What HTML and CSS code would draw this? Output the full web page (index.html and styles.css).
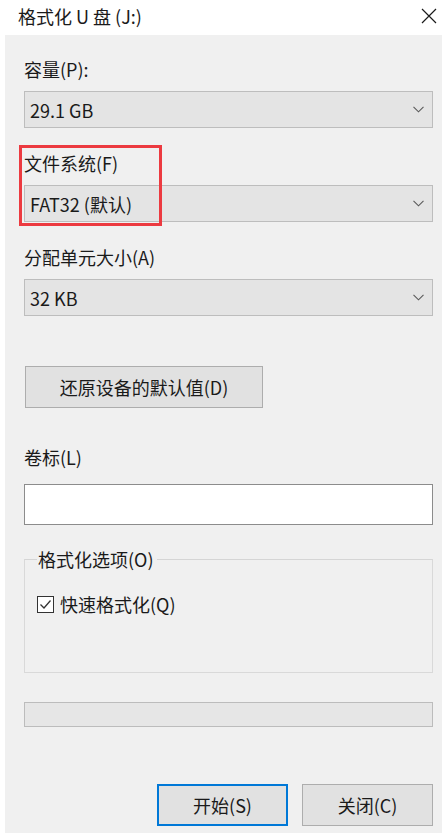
FILE: index.html
```html
<!DOCTYPE html>
<html lang="zh-CN">
<head>
<meta charset="utf-8">
<title>格式化 U 盘 (J:)</title>
<link rel="stylesheet" href="styles.css">
</head>
<body>
<div class="window">
  <div class="titlebar">
    <span class="title">格式化 U 盘 (J:)</span>
    <svg class="close" width="16" height="16" viewBox="0 0 16 16"><path d="M1 1 L15 15 M15 1 L1 15" stroke="#1a1a1a" stroke-width="1.2" fill="none"/></svg>
  </div>
  <div class="dialog">
    <div class="field">
      <div class="label">容量(P):</div>
      <div class="select"><span>29.1 GB</span><svg class="chev" width="11" height="7" viewBox="0 0 11 7"><path d="M0.5 0.8 L5.5 5.8 L10.5 0.8" stroke="#5a5a5a" stroke-width="1.1" fill="none"/></svg></div>
    </div>
    <div class="field field-gap">
      <div class="label">文件系统(F)</div>
      <div class="select"><span>FAT32 (默认)</span><svg class="chev" width="11" height="7" viewBox="0 0 11 7"><path d="M0.5 0.8 L5.5 5.8 L10.5 0.8" stroke="#5a5a5a" stroke-width="1.1" fill="none"/></svg></div>
      <div class="highlight"></div>
    </div>
    <div class="field field-gap">
      <div class="label">分配单元大小(A)</div>
      <div class="select"><span>32 KB</span><svg class="chev" width="11" height="7" viewBox="0 0 11 7"><path d="M0.5 0.8 L5.5 5.8 L10.5 0.8" stroke="#5a5a5a" stroke-width="1.1" fill="none"/></svg></div>
    </div>
    <button class="btn restore">还原设备的默认值(D)</button>
    <div class="label volume-label">卷标(L)</div>
    <div class="textbox"></div>
    <fieldset class="group">
      <legend>格式化选项(O)</legend>
      <div class="check-row">
        <svg class="checkbox" width="17" height="17" viewBox="0 0 17 17"><rect x="0.5" y="0.5" width="16" height="16" fill="#ffffff" stroke="#333333" stroke-width="1"/><path d="M3.5 8.5 L7 12 L13.5 4.5" stroke="#333333" stroke-width="1.3" fill="none"/></svg>
        <span>快速格式化(Q)</span>
      </div>
    </fieldset>
    <div class="progress"></div>
    <div class="actions">
      <button class="btn action primary">开始(S)</button>
      <button class="btn action">关闭(C)</button>
    </div>
  </div>
</div>
</body>
</html>
```

FILE: styles.css
```css
* { box-sizing: border-box; }
html, body {
  margin: 0;
  padding: 0;
  background: #ffffff;
}
body {
  font-family: "Noto Sans CJK SC", "Noto Sans", sans-serif;
  color: #1a1a1a;
  font-size: 18px;
}
.window {
  width: 442px;
  height: 833px;
  display: flex;
  flex-direction: column;
}
.titlebar {
  height: 35px;
  flex: none;
  display: flex;
  align-items: center;
  justify-content: space-between;
  padding: 0 5px 4px 18px;
  background: #ffffff;
}
.title {
  font-size: 18px;
  line-height: 24px;
  color: #1a1a1a;
}
.close { display: block; }
.dialog {
  flex: 1;
  margin-left: 5px;
  background: #f0f0f0;
  padding: 22px 9px 0 19px;
  display: flex;
  flex-direction: column;
}
.field { position: relative; }
.field-gap { margin-top: 23px; }
.label {
  line-height: 24px;
  height: 24px;
  margin-bottom: 10px;
}
.select {
  height: 37px;
  border: 1px solid #bdbdbd;
  background: #e4e4e4;
  display: flex;
  align-items: center;
  justify-content: space-between;
  padding: 0 8px 0 5px;
  line-height: 24px;
}
.chev { display: block; }
.highlight {
  position: absolute;
  left: -5px;
  top: -6px;
  width: 143px;
  height: 81px;
  border: 3px solid #ec3a40;
  pointer-events: none;
}
.btn {
  font-family: inherit;
  font-size: 18px;
  color: #1a1a1a;
  background: #e1e1e1;
  border: 1px solid #adadad;
  padding: 0;
  line-height: 24px;
}
.restore {
  margin-top: 50px;
  margin-left: 1px;
  width: 238px;
  height: 42px;
}
.volume-label {
  margin-top: 37px;
  margin-bottom: 15px;
}
.textbox {
  height: 41px;
  background: #ffffff;
  border: 1px solid #8c8c8c;
}
.group {
  margin: 24px 0 0 0;
  padding: 0 0 0 12px;
  height: 124px;
  border: 1px solid #d9d9d9;
  border-top-color: #d5d5d5;
}
.group legend {
  padding: 0 3px 0 1px;
  line-height: 20px;
  font-size: 18px;
}
.check-row {
  margin-top: 23px;
  display: flex;
  align-items: center;
  gap: 6px;
  line-height: 24px;
}
.checkbox { display: block; flex: none; }
.progress {
  margin-top: 29px;
  height: 25px;
  border: 1px solid #bcbcbc;
  background: #e6e6e6;
}
.actions {
  margin-top: 57px;
  display: flex;
  justify-content: flex-end;
  gap: 14px;
}
.action {
  width: 131px;
  height: 42px;
}
.primary {
  border: 2px solid #0078d7;
}
```
